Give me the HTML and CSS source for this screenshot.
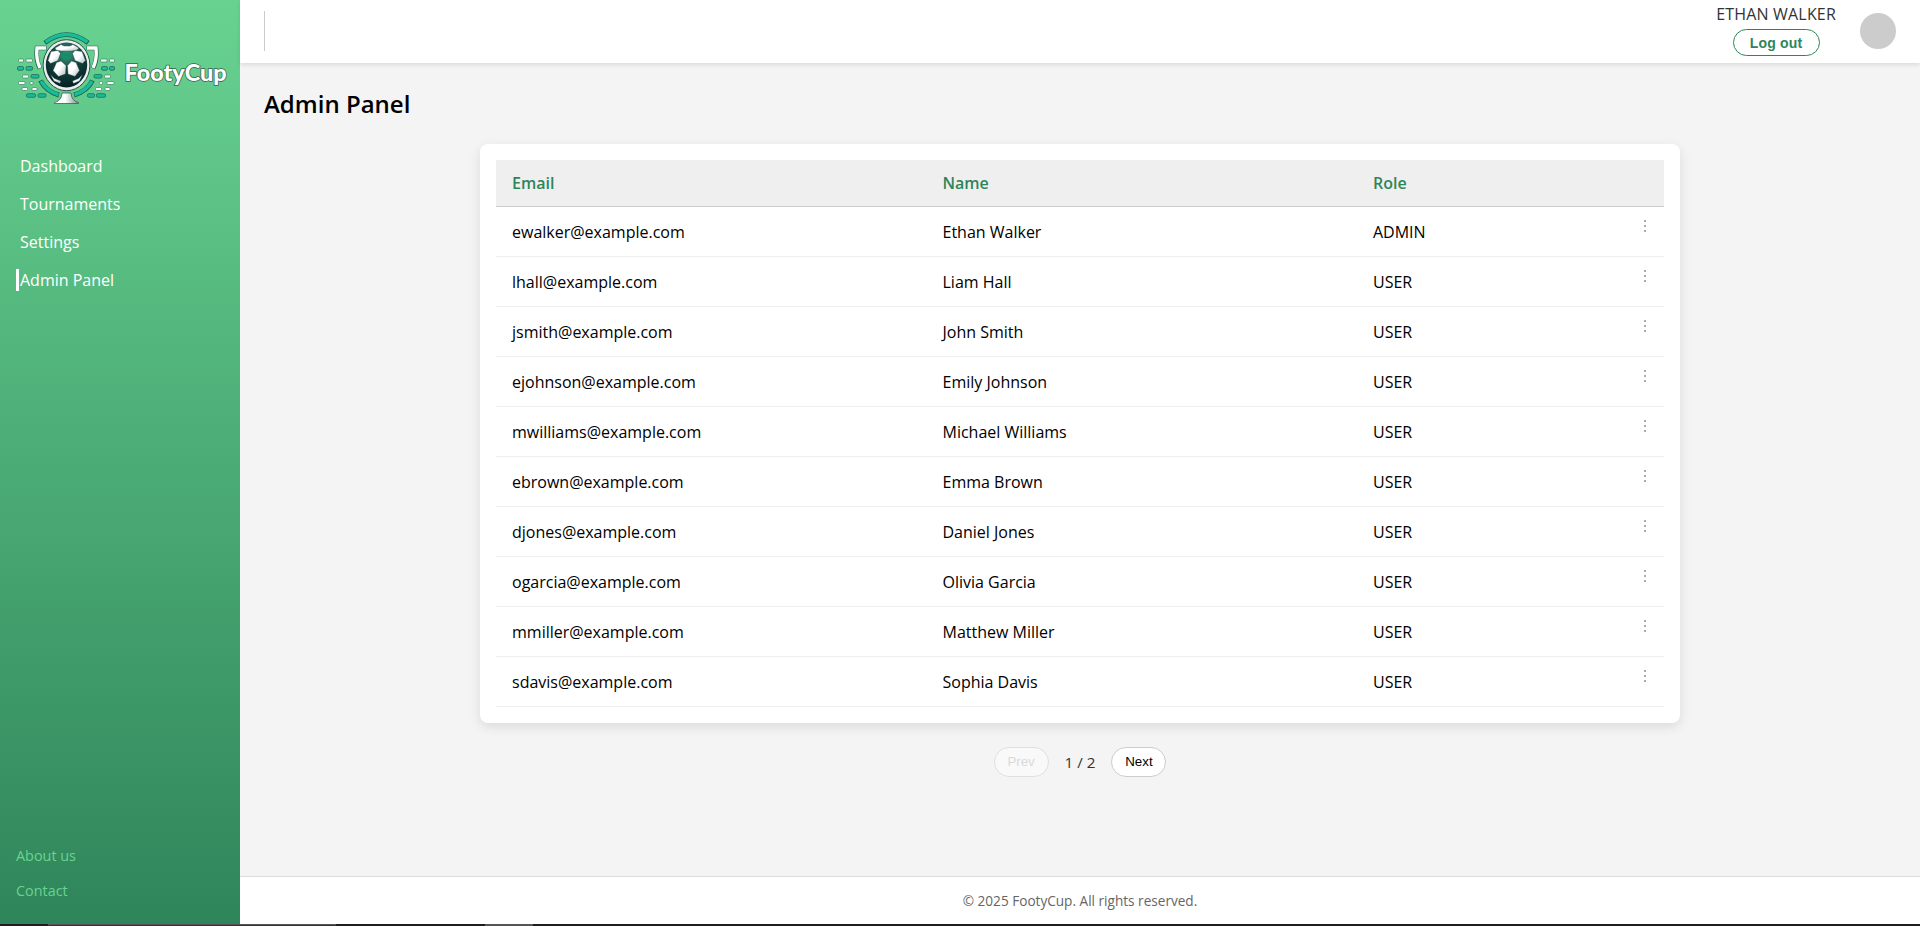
FILE: index.html
```html
<!DOCTYPE html>
<html lang="en">
<head>
<meta charset="utf-8">
<title>FootyCup</title>
<link rel="stylesheet" href="styles.css">
</head>
<body>
<div class="app">
  <aside class="sidebar">
    <svg class="logo" width="216" height="80" viewBox="12 28 216 80">
      <defs>
        <radialGradient id="ball" cx=".5" cy=".25" r=".8"><stop offset="0" stop-color="#3f9b83"/><stop offset=".45" stop-color="#12423f"/><stop offset="1" stop-color="#041a1c"/></radialGradient>
        <linearGradient id="panel" x1="0" y1="0" x2="1" y2="1"><stop offset=".5" stop-color="#fff"/><stop offset="1" stop-color="#aebbbd"/></linearGradient>
        <linearGradient id="stem" x1="0" x2="1"><stop offset="0" stop-color="#fff"/><stop offset=".45" stop-color="#fff"/><stop offset="1" stop-color="#7f8b8d"/></linearGradient>
      </defs>
      <g fill="none" stroke-linecap="butt">
        <path d="M44.800 42.800Q66.500 26.500 88.200 42.800" stroke="#245f4c" stroke-width="4.800"/>
        <path d="M45.500 42.200Q66.500 26.800 87.500 42.200" stroke="#16bc9b" stroke-width="3.400"/>
        <path d="M40.500 80.500Q46 91.500 59 95M92.500 80.500Q87 91.500 74 95" stroke="#245f4c" stroke-width="5"/>
        <path d="M41 81.200Q47 91.500 58.500 94.700M92 81.200Q86 91.500 74.500 94.700" stroke="#16bc9b" stroke-width="3.600"/>
        <path d="M46.500 48H37Q35.500 60 40 68.500M86.500 48H96Q97.500 60 93 68.500" stroke="#245f4c" stroke-width="4.600"/>
        <path d="M46 48H37Q35.800 59.500 40 68M87 48H96Q97.200 59.500 93 68" stroke="#fff" stroke-width="3.400"/>
      </g>
      <path d="M62 93H71Q71.500 101 78.500 102.500V103.500H54.500V102.500Q61.500 101 62 93Z" fill="url(#stem)" stroke="#3d5c55" stroke-width=".8"/>
      <ellipse cx="66.500" cy="65.200" rx="23.400" ry="25.500" fill="#e9eeee" stroke="#2c5049" stroke-width="1"/>
      <ellipse cx="66.500" cy="65" rx="20.700" ry="22.400" fill="url(#ball)"/>
      <g fill="url(#panel)" stroke="#173d3c" stroke-width=".4" stroke-linejoin="round">
        <path d="M55 48L61 44.500L64 46L70 46L73 44.500L79 48L77 50L72 51L61 51L56 50Z"/>
        <path d="M51 51.500L58 50.500L60.500 53.500L58 60.500L50.500 63.500L48 60.500Z"/>
        <path d="M75 50.500L82 51.500L85.500 60.500L82.500 63.500L75 60.500L72.500 53.500Z"/>
        <path d="M56.500 62.500L61 61L66 65.500L65.500 74L58.500 76.500L53 70.500Z"/>
        <path d="M76 62.500L71.500 61L67.500 65.500L68 74L75 76.500L79.500 70.500Z"/>
        <path d="M50.500 74.500L54.500 78.500L61 81L60 83.500L54 81Z"/>
        <path d="M82.500 74.500L78.500 78.500L72.500 81L73.500 83.500L79.500 81Z"/>
      </g>
      <path d="M61.500 52.500H71L72 54L70 59.500H63L60.500 54Z" fill="#168c68"/>
      <g stroke="#3d7e62" stroke-width=".7" fill="#fff">
        <rect x="18.500" y="59" width="5" height="3" rx="1"/><rect x="26" y="59" width="6.500" height="3" rx="1"/>
        <rect x="22.500" y="75" width="6" height="3" rx="1"/><rect x="18.500" y="81.500" width="6.500" height="3" rx="1"/><rect x="30" y="81.500" width="3" height="3" rx="1"/>
        <rect x="22" y="87.500" width="5.500" height="3" rx="1"/><rect x="32" y="87.500" width="5" height="3" rx="1"/>
        <rect x="100.500" y="59" width="6.500" height="3" rx="1"/><rect x="109.500" y="59" width="5" height="3" rx="1"/>
        <rect x="104.500" y="75" width="6" height="3" rx="1"/><rect x="99.500" y="81.500" width="3" height="3" rx="1"/><rect x="107" y="81.500" width="7" height="3" rx="1"/>
        <rect x="95.500" y="87.500" width="6" height="3" rx="1"/><rect x="105" y="87.500" width="5" height="3" rx="1"/>
      </g>
      <g stroke="#1f6f59" stroke-width=".8" fill="#16bc9b">
        <rect x="17.500" y="66.500" width="6" height="3.800" rx="1.300"/><rect x="26" y="66.500" width="6.500" height="3.800" rx="1.300"/><rect x="31" y="74.500" width="8" height="3.600" rx="1.300"/>
        <rect x="26.500" y="93.700" width="9" height="3.600" rx="1.300"/><rect x="38" y="93.700" width="8" height="3.600" rx="1.300"/>
        <rect x="101.500" y="66.500" width="6" height="3.800" rx="1.300"/><rect x="109.500" y="66.500" width="5" height="3.800" rx="1.300"/><rect x="94" y="74.500" width="8" height="3.600" rx="1.300"/>
        <rect x="87.500" y="93.700" width="7" height="3.600" rx="1.300"/><rect x="96.500" y="93.700" width="9" height="3.600" rx="1.300"/>
      </g>
      <text class="wordmark" x="124.500" y="81" textLength="102" lengthAdjust="spacingAndGlyphs">FootyCup</text>
    </svg>
    <nav class="menu">
      <a>Dashboard</a><a>Tournaments</a><a>Settings</a><a class="active">Admin Panel</a>
    </nav>
    <nav class="links"><a>About us</a><a>Contact</a></nav>
  </aside>
  <div class="page">
    <header class="topbar">
      <span class="divider"></span>
      <div class="account">
        <div class="user"><span class="name">ETHAN WALKER</span><button class="logout">Log out</button></div>
        <span class="avatar"></span>
      </div>
    </header>
    <main class="content">
      <h1>Admin Panel</h1>
      <section class="card">
        <table>
          <thead><tr><th>Email</th><th>Name</th><th>Role</th><th></th></tr></thead>
          <tbody>
            <tr><td>ewalker@example.com</td><td>Ethan Walker</td><td>ADMIN</td><td class="more"><i></i><i></i><i></i></td></tr>
            <tr><td>lhall@example.com</td><td>Liam Hall</td><td>USER</td><td class="more"><i></i><i></i><i></i></td></tr>
            <tr><td>jsmith@example.com</td><td>John Smith</td><td>USER</td><td class="more"><i></i><i></i><i></i></td></tr>
            <tr><td>ejohnson@example.com</td><td>Emily Johnson</td><td>USER</td><td class="more"><i></i><i></i><i></i></td></tr>
            <tr><td>mwilliams@example.com</td><td>Michael Williams</td><td>USER</td><td class="more"><i></i><i></i><i></i></td></tr>
            <tr><td>ebrown@example.com</td><td>Emma Brown</td><td>USER</td><td class="more"><i></i><i></i><i></i></td></tr>
            <tr><td>djones@example.com</td><td>Daniel Jones</td><td>USER</td><td class="more"><i></i><i></i><i></i></td></tr>
            <tr><td>ogarcia@example.com</td><td>Olivia Garcia</td><td>USER</td><td class="more"><i></i><i></i><i></i></td></tr>
            <tr><td>mmiller@example.com</td><td>Matthew Miller</td><td>USER</td><td class="more"><i></i><i></i><i></i></td></tr>
            <tr><td>sdavis@example.com</td><td>Sophia Davis</td><td>USER</td><td class="more"><i></i><i></i><i></i></td></tr>
          </tbody>
        </table>
      </section>
      <div class="pager"><button disabled>Prev</button><span>1 / 2</span><button>Next</button></div>
    </main>
    <footer class="footer">© 2025 FootyCup. All rights reserved.</footer>
  </div>
</div>
<div class="taskbar"><span class="task-first"></span><span class="task-second"></span></div>
</body>
</html>
```
FILE: styles.css
```css
* { box-sizing: border-box; }
body { margin: 0; height: 926px; overflow: hidden; font: 16px/22px "Open Sans", sans-serif; color: #000; background: #f4f4f4; }
.app { display: flex; height: 924px; }
.sidebar { width: 240px; display: flex; flex-direction: column; padding: 28px 0 24px; background: linear-gradient(#68d391, #2f855a); color: #fff; }
.logo { margin-left: 12px; flex: none; }
.wordmark { font: 900 23.5px Lato, sans-serif; fill: #fff; stroke: #37644f; stroke-width: 1.6px; paint-order: stroke; }
.menu { display: flex; flex-direction: column; gap: 16px; padding: 47px 16px 0; }
.menu a { height: 22px; padding-left: 4px; }
.menu .active { padding-left: 1px; border-left: 3px solid #fff; }
.links { margin-top: auto; display: flex; flex-direction: column; gap: 16px; padding-left: 16px; font-size: 14.4px; line-height: 19px; color: #68d391; }
.page { flex: 1; display: flex; flex-direction: column; }
.topbar { height: 63px; display: flex; justify-content: space-between; padding: 0 24px; background: #fff; box-shadow: 0 2px 4px rgba(0,0,0,.1); }
.divider { width: 1px; height: 40px; margin-top: 11px; background: #ccc; }
.account { height: 62px; display: flex; align-items: center; gap: 24px; }
.user { display: flex; flex-direction: column; align-items: center; gap: 4px; padding-bottom: 3px; color: #333; }
.name { letter-spacing: .18px; }
.logout { width: 87px; height: 27px; padding: 0; border: 1px solid #2f855a; border-radius: 14px; background: #fff; color: #2f855a; font: 700 14px "Liberation Sans", sans-serif; letter-spacing: .2px; }
.avatar { width: 36px; height: 36px; border-radius: 50%; background: #ccc; }
.content { flex: 1; padding: 24px; }
h1 { margin: 0 0 24px; font-size: 24px; line-height: 33px; font-weight: 600; }
.card { width: 1200px; height: 579px; margin: 0 auto; padding: 16px; border-radius: 8px; background: #fff; box-shadow: 0 4px 12px rgba(0,0,0,.1); }
table { width: 100%; table-layout: fixed; border-collapse: separate; border-spacing: 0; }
th { height: 47px; padding: 0 16px; text-align: left; font-weight: 600; color: #2f855a; background: #efefef; border-bottom: 1px solid #ccc; }
td { height: 50px; padding: 0 16px; border-bottom: 1px solid #eee; }
th:nth-child(1), th:nth-child(2) { width: 430.500px; }
th:nth-child(4) { width: 48px; }
.more { vertical-align: top; padding: 13px 0 0 28px; }
.more i { display: block; width: 2px; height: 2px; margin-bottom: 3px; background: #aaa; }
.more i:last-child { margin-bottom: 0; }
.pager { display: flex; justify-content: center; align-items: center; gap: 16px; margin-top: 24px; font-size: 15.2px; color: #333; }
.pager button { width: 55px; height: 30px; padding: 0 0 2px; border: 1px solid #ccc; border-radius: 15px; background: #fff; color: #000; font: 13.333px "Liberation Sans", sans-serif; }
.pager button:disabled { opacity: .5; color: #c0c0c0; }
.footer { height: 48px; border-top: 1px solid #ddd; background: #fff; text-align: center; font-size: 13.6px; line-height: 47px; color: #666; }
.taskbar { height: 2px; display: flex; padding-left: 48px; background: #1e1e1e; }
.task-first { width: 288px; border: 1px solid #555; border-bottom-color: #333; }
.task-second { width: 48px; margin-left: 149px; background: #555; }
```
